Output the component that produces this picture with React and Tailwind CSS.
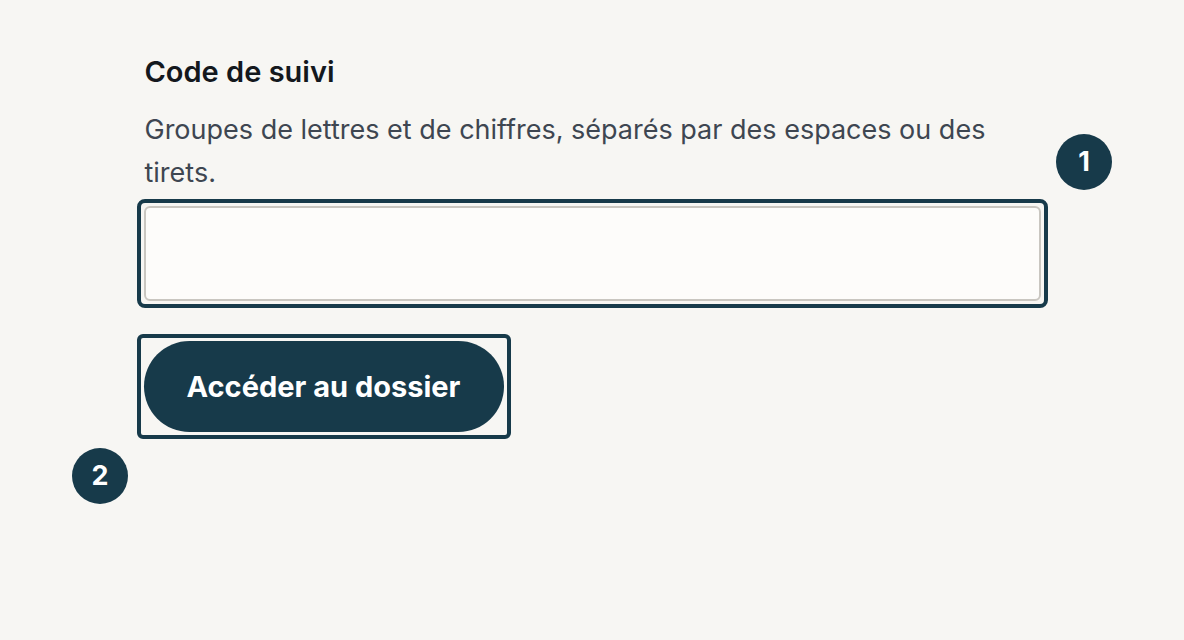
export default function App() {
  return (
    <div className="relative min-h-screen w-full bg-[#f7f6f3] font-['Inter','Noto_Sans',sans-serif]">
      <div className="mx-auto w-[895px] pt-[54px]">
        <label htmlFor="tracking" className="block text-[29px] font-semibold leading-[36px] text-[#14181d]">
          Code de suivi
        </label>
        <p className="mt-[18px] text-[27px] leading-[43px] text-[#3e4651]">
          Groupes de lettres et de chiffres, séparés par des espaces ou des tirets.
        </p>
        <div className="mt-[5px] -mx-[8px] rounded-lg border-4 border-[#173a4a] p-[3px]">
          <input
            id="tracking"
            type="text"
            className="block h-[95px] w-full rounded-md border-2 border-[#c9c6c0] bg-[#fdfcfa] px-4 text-[27px] outline-none"
          />
        </div>
        <div className="mt-[26px] -ml-[8px] inline-block rounded-md border-4 border-[#173a4a] p-[3px]">
          <button
            type="button"
            className="h-[91px] w-[360px] rounded-full bg-[#173a4a] text-[29px] font-bold text-white"
          >
            Accéder au dossier
          </button>
        </div>
      </div>

      <span className="absolute left-[1056px] top-[134px] flex h-[56px] w-[56px] items-center justify-center rounded-full bg-[#173a4a] text-[27px] font-bold text-white">
        1
      </span>
      <span className="absolute left-[72px] top-[448px] flex h-[56px] w-[56px] items-center justify-center rounded-full bg-[#173a4a] text-[27px] font-bold text-white">
        2
      </span>
    </div>
  );
}
